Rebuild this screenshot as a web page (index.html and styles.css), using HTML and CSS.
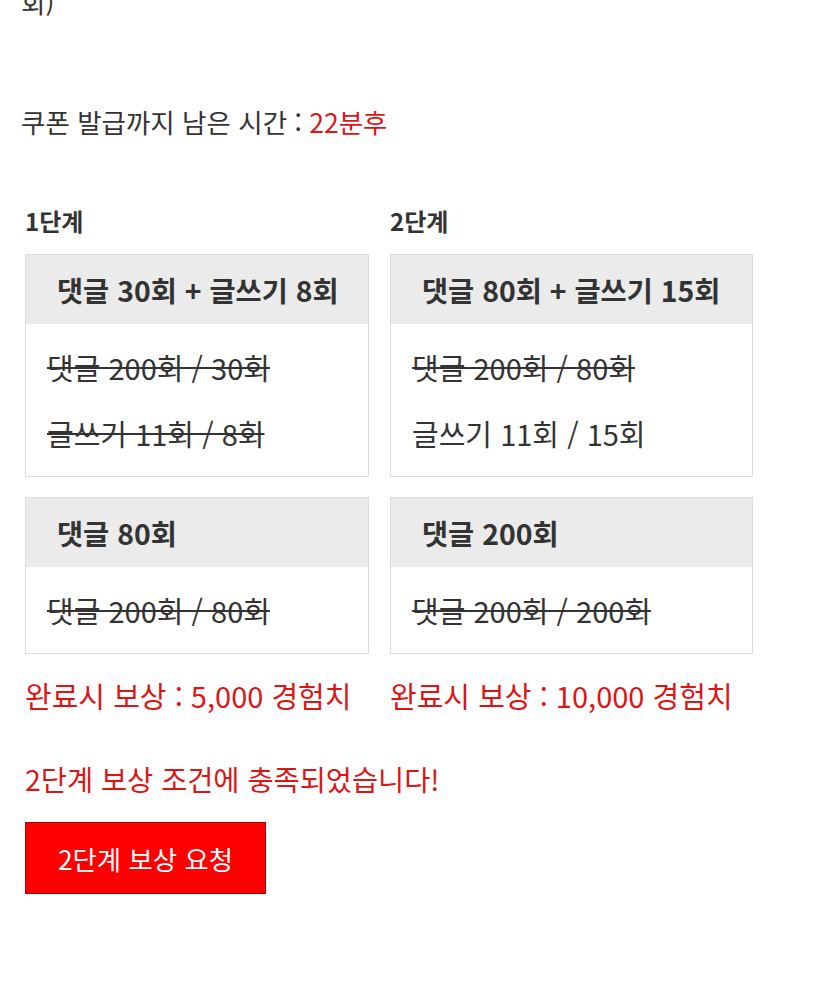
FILE: index.html
```html
<!DOCTYPE html>
<html lang="ko">
<head>
<meta charset="utf-8">
<link rel="stylesheet" href="styles.css">
</head>
<body>
<div class="page">
  <div class="prev">회)</div>
  <div class="timer">쿠폰 발급까지 남은 시간 : <span class="red">22분후</span></div>
  <div class="stages">
    <div class="label">1단계</div>
    <div class="label">2단계</div>

    <div class="card">
      <div class="card-head">댓글 30회 + 글쓰기 8회</div>
      <div class="card-body">
        <div class="done">댓글 200회 / 30회</div>
        <div class="done">글쓰기 11회 / 8회</div>
      </div>
    </div>
    <div class="card">
      <div class="card-head">댓글 80회 + 글쓰기 15회</div>
      <div class="card-body">
        <div class="done">댓글 200회 / 80회</div>
        <div>글쓰기 11회 / 15회</div>
      </div>
    </div>

    <div class="card">
      <div class="card-head">댓글 80회</div>
      <div class="card-body">
        <div class="done">댓글 200회 / 80회</div>
      </div>
    </div>
    <div class="card">
      <div class="card-head">댓글 200회</div>
      <div class="card-body">
        <div class="done">댓글 200회 / 200회</div>
      </div>
    </div>

    <div class="reward">완료시 보상 : 5,000 경험치</div>
    <div class="reward">완료시 보상 : 10,000 경험치</div>
  </div>
  <div class="notice">2단계 보상 조건에 충족되었습니다!</div>
  <button class="btn" type="button">2단계 보상 요청</button>
</div>
</body>
</html>
```
FILE: styles.css
```css
html, body {
  margin: 0;
  padding: 0;
  background: #fff;
}
body {
  font-family: "Noto Sans CJK KR", "Noto Sans", sans-serif;
  color: #333;
  font-size: 26px;
}
.page {
  padding-left: 21px;
}
.prev {
  line-height: 40px;
  margin-top: -18px;
  font-size: 26.5px;
}
.timer {
  line-height: 40px;
  margin-top: 80px;
  font-size: 26.5px;
}
.red {
  color: #dd1515;
}
.stages {
  display: grid;
  grid-template-columns: 344px 363px;
  column-gap: 21px;
  margin-left: 4px;
  margin-top: 59px;
}
.label {
  font-size: 24px;
  font-weight: 700;
  line-height: 40px;
  margin-bottom: 13px;
}
.card {
  border: 1px solid #dcdcdc;
  margin-bottom: 20px;
}
.card-head {
  background: #ebebeb;
  height: 69px;
  display: flex;
  align-items: center;
  padding-left: 31px;
  font-weight: 700;
  font-size: 28.4px;
}
.card-body {
  padding: 10px 0 10px 21px;
  line-height: 66px;
  font-size: 29px;
}
.done {
  text-decoration: line-through;
}
.reward {
  color: #dd1515;
  line-height: 40px;
  margin-top: 1px;
  font-size: 29px;
}
.notice {
  color: #dd1515;
  line-height: 40px;
  margin-top: 44px;
  margin-left: 4px;
  font-size: 28.4px;
}
.btn {
  display: flex;
  align-items: center;
  justify-content: center;
  margin: 23px 0 0 4px;
  width: 241px;
  height: 72px;
  background: #ff0000;
  border: 1px solid #b00000;
  color: #fff;
  font-family: "Noto Sans CJK KR", "Noto Sans", sans-serif;
  font-size: 26.4px;
  padding: 0;
}
```
